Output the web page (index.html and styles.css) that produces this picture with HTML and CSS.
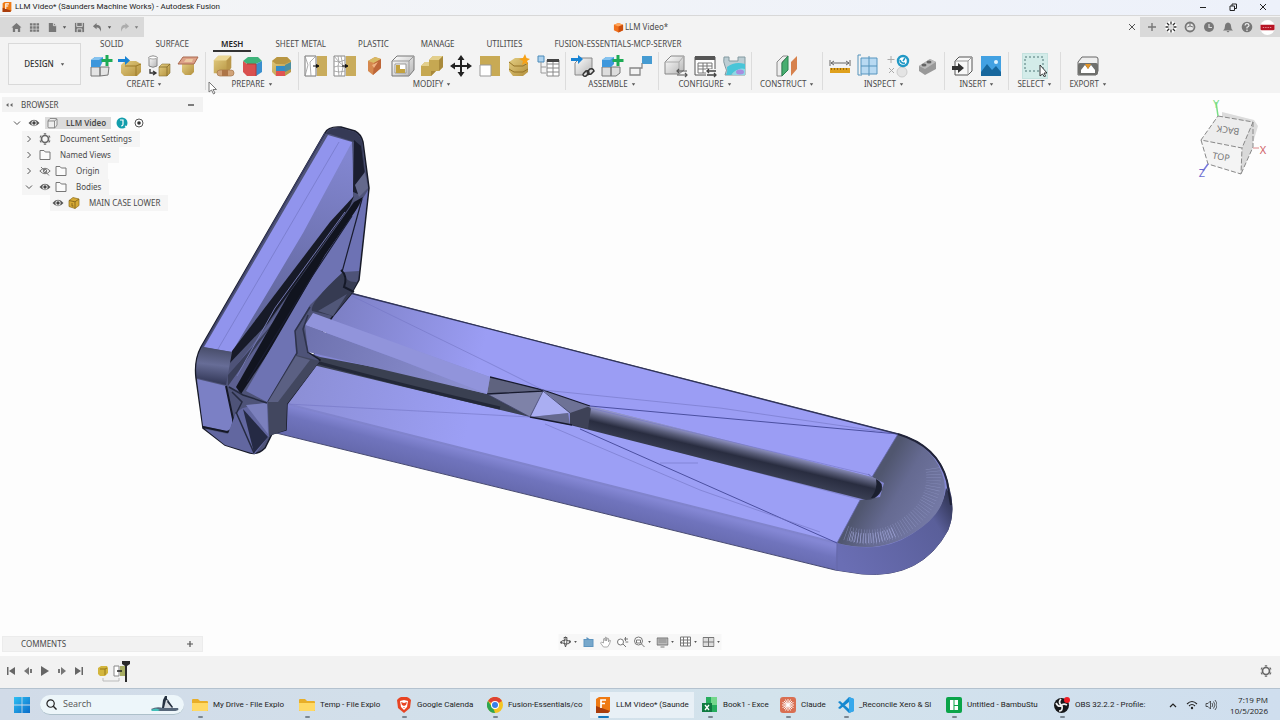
FILE: index.html
```html
<!DOCTYPE html>
<html lang="en">
<head>
<meta charset="utf-8">
<title>LLM Video* (Saunders Machine Works) - Autodesk Fusion</title>
<link rel="stylesheet" href="styles.css">
</head>
<body>
<svg class="defs" aria-hidden="true">
  <defs>
    <linearGradient id="gold" x1="0" y1="0" x2="1" y2="1"><stop offset="0" stop-color="#e3cd82"/><stop offset="1" stop-color="#b3903c"/></linearGradient>
    <linearGradient id="steel" x1="0" y1="0" x2="1" y2="1"><stop offset="0" stop-color="#fff"/><stop offset="1" stop-color="#b4b4b4"/></linearGradient>
    <linearGradient id="sky" x1="0" y1="0" x2="1" y2="1"><stop offset="0" stop-color="#2fc0f3"/><stop offset="1" stop-color="#0a6cc9"/></linearGradient>
    <symbol id="caret" viewBox="0 0 6 6"><path d="M1 1.500h4L3 4.500z" fill="#555"/></symbol>
    <symbol id="eye" viewBox="0 0 12 12"><path d="M.5 6Q6-.5 11.500 6 6 12.500.5 6z" fill="#555"/><circle cx="6" cy="6" r="2.600" fill="#f3f3f3"/><circle cx="6" cy="6" r="1.700" fill="#444"/></symbol>
    <symbol id="eye-off" viewBox="0 0 12 12"><path d="M.8 6Q6 .5 11.200 6 6 11.500.8 6zM2 2l8 8.500" fill="none" stroke="#777"/><circle cx="6" cy="6" r="1.700" fill="none" stroke="#777"/></symbol>
    <symbol id="folder" viewBox="0 0 12 12"><path d="M1 10.500v-9h4l1.300 1.500H11v7.500z" fill="#fbfbfb" stroke="#777"/></symbol>
    <symbol id="right" viewBox="0 0 12 12"><path d="M4.500 3l3 3-3 3" fill="none" stroke="#555"/></symbol>
    <symbol id="down" viewBox="0 0 12 12"><path d="M3 4.500l3 3 3-3" fill="none" stroke="#555"/></symbol>
    <symbol id="gear" viewBox="0 0 12 12"><path d="M6 1.500V.3M6 11.700v-1.200M2.100 3.800l-1-.6M10.900 8.800l-1-.6M9.900 3.800l1-.6M1.100 8.800l1-.6" stroke="#666" stroke-width="2.400"/><circle cx="6" cy="6" r="3.500" fill="none" stroke="#666" stroke-width="1.700"/></symbol>
    <symbol id="cube" viewBox="0 0 12 12"><path d="M2 4q0-.5 2-2.500h6q1 0 1 1V8l-2 2.800H3q-1 0-1-1zM2 4h6.500L11 2M8.500 4v6.800" fill="#eee" stroke="#777" stroke-width=".8"/></symbol>
    <symbol id="body" viewBox="0 0 12 12"><path d="M1 3.500L5 .5l6 1.500v6.500l-4 3L1 9.500z" fill="#d6aa35" stroke="#8a6a1a" stroke-width=".7"/><path d="M1 3.500l6 1.300 4-2.800M7 5v6.500M4 6v3h1.500" fill="none" stroke="#7a5c15" stroke-width=".8"/></symbol>
    <symbol id="goldbox" viewBox="0 0 24 24"><path d="M3 7l5-5h13q1 0 1 1v12l-5 6H3z" fill="url(#gold)"/><path d="M3 7l5-5h14l-5 5z" fill="#ead694"/><path d="M17 7l5-5v13l-5 6z" fill="#b9974a"/></symbol>
    <symbol id="fusion" viewBox="0 0 16 16"><path d="M1 2l3-2h11v14l-2 2H1z" fill="#ef7a13"/><path d="M1 9l14 5-2 2H1z" fill="#a93d0c"/><path d="M6 11V3h5M6 6.500h4" fill="none" stroke="#fff" stroke-width="1.700"/></symbol>
    <symbol id="files" viewBox="0 0 16 16"><path d="M0 3q0-1 1-1h5l2 2h7q1 0 1 1v9H0z" fill="#e8ae28"/><path d="M0 6h16v7q0 1-1 1H1q-1 0-1-1z" fill="#ffd964"/></symbol>
  </defs>
</svg>

<header class="titlebar">
  <svg class="i9"><use href="#fusion"/></svg>
  <h1 class="app-title">LLM Video* (Saunders Machine Works) - Autodesk Fusion</h1>
  <div class="window-buttons">
    <button aria-label="Minimize"><svg viewBox="0 0 10 10"><path d="M2 5.500h6" stroke="#222"/></svg></button>
    <button aria-label="Restore"><svg viewBox="0 0 10 10"><path d="M2 4h4.500v4.500H2zM4 4V2h4.500v4.500h-2" fill="none" stroke="#222"/></svg></button>
    <button aria-label="Close"><svg viewBox="0 0 10 10"><path d="M2 2l6 6M8 2L2 8" stroke="#222"/></svg></button>
  </div>
</header>

<div class="tabstrip">
  <nav class="quick">
    <button aria-label="Home"><svg viewBox="0 0 12 12"><path d="M6 1l5.500 5H10v5H7.500V7.500h-3V11H2V6H.5z" fill="#777"/></svg></button>
    <button aria-label="Data panel"><svg viewBox="0 0 12 12"><path d="M1 2.500h10M1 6h10M1 9.500h10" stroke="#777" stroke-width="2.500" stroke-dasharray="2.800 .8"/></svg></button>
    <button aria-label="File" class="with-caret"><svg viewBox="0 0 12 12"><path d="M2 1h5l3 3v7H2z" fill="#777"/><path d="M7 1v3h3" stroke="#ddd" fill="none"/></svg><svg class="caret"><use href="#caret"/></svg></button>
    <button aria-label="Save"><svg viewBox="0 0 12 12"><path d="M1 1h10v10H1z" fill="#777"/><path d="M3 1v4h6V1M3.500 11V7.500h5V11" fill="none" stroke="#ddd"/></svg></button>
    <button aria-label="Undo" class="with-caret"><svg viewBox="0 0 12 12"><path d="M5 1L1 4.500 5 8V6q3-.5 4.500 4.500Q11 3 5 3z" fill="#777"/></svg><svg class="caret"><use href="#caret"/></svg></button>
    <button aria-label="Redo" class="with-caret faded"><svg viewBox="0 0 12 12"><path d="M7 1l4 3.500L7 8V6q-3-.5-4.500 4.500Q1 3 7 3z" fill="#999"/></svg><svg class="caret"><use href="#caret"/></svg></button>
  </nav>
  <div class="doc-tab">
    <svg class="i11" viewBox="0 0 12 12"><path d="M1 3l5-2 5 2v6l-5 2.500L1 9z" fill="#f0701c"/><path d="M1 3l5 2 5-2-5-2z" fill="#ffa65c"/><path d="M6 5v6.500L11 9V3z" fill="#cb4e0c"/></svg>
    <span>LLM Video*</span>
    <button class="tab-close" aria-label="Close tab"><svg viewBox="0 0 10 10"><path d="M2 2l6 6M8 2L2 8" stroke="#555"/></svg></button>
  </div>
  <nav class="account">
    <button aria-label="New design"><svg viewBox="0 0 12 12"><path d="M6 2v8M2 6h8" stroke="#777" stroke-width="1.400"/></svg></button>
    <button aria-label="Extensions"><svg viewBox="0 0 12 12"><circle cx="6" cy="6" r="4" fill="none" stroke="#fff" stroke-width="4"/><path d="M6 .5v3M6 8.500v3M.5 6h3M8.500 6h3M2 2l2.200 2.200M7.800 7.800L10 10M10 2L7.800 4.200M4.200 7.800L2 10" stroke="#333" stroke-width="1.300"/></svg></button>
    <button aria-label="Online status"><svg viewBox="0 0 12 12"><circle cx="6" cy="6" r="4.500" fill="#e6e6e6" stroke="#777" stroke-width="1.800"/><path d="M6 2v3l3 1M6 5L3.500 6" stroke="#777" fill="none"/></svg></button>
    <button aria-label="Job status"><svg viewBox="0 0 12 12"><circle cx="6" cy="6" r="5" fill="#777"/><path d="M6 3v3.500h3" stroke="#ddd" fill="none" stroke-width="1.200"/></svg></button>
    <button aria-label="Notifications"><svg viewBox="0 0 12 12"><path d="M1 9.500Q3 8 3 5q0-3 3-3.500Q9 2 9 5q0 3 2 4.500zM4.500 10h3L6 11.500z" fill="#777"/></svg></button>
    <button aria-label="Help"><svg viewBox="0 0 12 12"><circle cx="6" cy="6" r="5.300" fill="#777"/><path d="M4 4.500q.2-1.800 2-1.800t2 1.700q0 1-2 2v1M6 8.500V10" stroke="#eee" fill="none" stroke-width="1.200"/></svg></button>
    <button aria-label="Profile" class="avatar"><svg viewBox="0 0 16 16"><circle cx="8" cy="8" r="8" fill="#fff"/><path d="M.5 5h15v5l-1 1h-13l-1-1z" fill="#b71525"/><path d="M3 8h10" stroke="#e7929b" stroke-dasharray="1.500 1"/></svg></button>
  </nav>
</div>

<section class="ribbon">
  <button class="workspace-switch">DESIGN <svg class="caret"><use href="#caret"/></svg></button>
  <div class="ribbon-main">
    <nav class="ribbon-tabs">
      <button>SOLID</button><button>SURFACE</button><button class="active">MESH</button><button>SHEET METAL</button><button>PLASTIC</button><button>MANAGE</button><button>UTILITIES</button><button>FUSION-ESSENTIALS-MCP-SERVER</button>
    </nav>
    <div class="groups">
      <div class="group">
        <div class="tools">
          <button aria-label="Insert mesh"><svg viewBox="0 0 24 24"><path d="M2 13h9v9H2zM11 13h9l-1 8-8 1z" fill="#e4e4e4" stroke="#777"/><path d="M2 6l4-3h8v4l-3 6H2z" fill="#3d97dc"/><path d="M2 6l4-3h8l-4 3z" fill="#86c3ef"/><path d="M18 1v11M12.500 6.500h11" stroke="#1eab55" stroke-width="3"/></svg></button>
          <button aria-label="Tessellate"><svg viewBox="0 0 24 24"><path d="M3 11l4-4h11l5 3v8l-4 4H6l-3-3z" fill="url(#gold)"/><path d="M7 12h11l5-2M18 12v10" stroke="#9b7a2a" fill="none"/><path d="M0 5h7V2l5 4.500L7 11V8H0z" fill="#1783d4"/></svg></button>
          <button aria-label="Convert"><svg viewBox="0 0 24 24"><path d="M2 3v9q4 2.500 8 0V3q-4-2-8 0z" fill="url(#steel)" stroke="#888"/><ellipse cx="6" cy="3.500" rx="4" ry="1.500" fill="#fff" stroke="#888" stroke-width=".7"/><path d="M12 13l3-3h8v9l-3 3h-8z" fill="url(#gold)" stroke="#8a7232" stroke-width=".6"/><path d="M12 13h8v9M20 13l3-3" stroke="#7a6224" fill="none" stroke-width=".7"/><path d="M3 15v4h5M6 17l3 2-3 2" stroke="#333" fill="none" stroke-width="1.300"/></svg></button>
          <button aria-label="Plane section"><svg viewBox="0 0 24 24"><path d="M6 9h12v9l-3 3H9l-3-3z" fill="url(#gold)"/><path d="M2 10L7 3h15l-4 7z" fill="#dda188" stroke="#a96a50"/><path d="M8 8l2-3h7l-1 3z" fill="#ecc9a0"/></svg></button>
        </div>
        <button class="group-label">CREATE <svg class="caret"><use href="#caret"/></svg></button>
      </div>
      <div class="group">
        <div class="tools">
          <button aria-label="Repair"><svg viewBox="0 0 24 24"><use href="#goldbox" width="22" height="22"/><rect x="6" y="16" width="17" height="6" rx="3" fill="#d0a379" stroke="#a37548" stroke-width=".7"/><path d="M11 16h6v6h-6z" fill="#ad7547"/></svg></button>
          <button aria-label="Generate face groups"><svg viewBox="0 0 24 24"><path d="M3 7l5-4h10l4 4-6 3H7z" fill="#3fb37a"/><path d="M3 7l4 3h9v12H7l-4-4z" fill="#d9504f"/><path d="M16 10l6-3v11l-6 4z" fill="#3a8fce"/><path d="M7 10h9v12" stroke="#b63a3a" fill="none"/></svg></button>
          <button aria-label="Combine face groups"><svg viewBox="0 0 24 24"><path d="M3 7l5-4h10l4 4v11l-6 4H7l-4-4z" fill="url(#gold)"/><path d="M3 7l4 3h9l6-3-4-4H8z" fill="#b89643"/><path d="M7 12h9v5H7z" fill="#338cc6"/><path d="M7 17h9v5H7z" fill="#df5453"/><path d="M16 11l6-3v7l-6 3z" fill="#4b8fa0"/></svg></button>
        </div>
        <button class="group-label">PREPARE <svg class="caret"><use href="#caret"/></svg></button>
      </div>
      <div class="group">
        <div class="tools">
          <button aria-label="Remesh"><svg viewBox="0 0 24 24"><path d="M1 2h11v20H1z" fill="#fff" stroke="#777"/><path d="M1 2l3 9-3 11M12 2L6 8l1 14" fill="none" stroke="#999" stroke-width=".8"/><path d="M13 2h10v20H13z" fill="#c9ac5c"/><path d="M9 12h5M12.500 10.500l2.500 1.500-2.500 1.500z" stroke="#111" fill="#111"/></svg></button>
          <button aria-label="Reduce"><svg viewBox="0 0 24 24"><path d="M1 2h11v20H1z" fill="#fff" stroke="#888"/><path d="M1 7l5 1 6-2M1 13l4-1 7 1M1 17l5 1 6-1M5 2l1 6-1 4 1 10M8 2l1 5 1 6-2 9M1 2l5 6 6 5" fill="none" stroke="#999" stroke-width=".8"/><path d="M13 2h10v20H13z" fill="#c9ac5c"/><path d="M9 12h5M12.500 10.500l2.500 1.500-2.500 1.500z" stroke="#111" fill="#111"/></svg></button>
          <button aria-label="Direct edit"><svg viewBox="0 0 24 24"><path d="M6 7l7-4 6 2v9l-8 7-5-4z" fill="#d6884e"/><path d="M6 7l7-4 6 2-7 4z" fill="#d8ba64"/><path d="M12 9l7-4v9l-8 7z" fill="#bd6638"/><path d="M10 11l6-3-4 6z" fill="#f0b281"/></svg></button>
          <button aria-label="Shell"><svg viewBox="0 0 24 24"><path d="M1 7l5-5h17v14l-5 6H1z" fill="url(#steel)" stroke="#777"/><path d="M1 7h17v15M18 7l5-5" stroke="#999" fill="none"/><path d="M4 10h11v9H4z" fill="#fff" stroke="#999"/><path d="M5 11h4v4h5v4H5z" fill="#c3a23f"/></svg></button>
          <button aria-label="Combine"><svg viewBox="0 0 24 24"><path d="M9 6l4-4h10v11l-4 4h-3l-5 5H1V12l4-4h4z" fill="#c6a852"/><path d="M9 6l4-4h10l-4 4zM1 12l4-4h4v4z" fill="#e3cf8c"/><path d="M19 6l4-4v11l-4 4zM11 17h5l-5 5z" fill="#a98a3c"/></svg></button>
          <button aria-label="Move"><svg viewBox="0 0 24 24"><path d="M12 1l3.500 5h-7zM12 23l3.500-5h-7zM1 12l5-3.500v7zM23 12l-5-3.500v7z" fill="#222"/><path d="M12 4v16M4 12h16" stroke="#222" stroke-width="2"/></svg></button>
          <button aria-label="Scale"><svg viewBox="0 0 24 24"><path d="M2 2h20v20H2z" fill="#c8aa55"/><path d="M2 11h11v11H2z" fill="#fff" stroke="#999"/></svg></button>
          <button aria-label="Erase and fill"><svg viewBox="0 0 24 24"><path d="M2 8l6-4h10l3 5v9l-5 4H6l-4-5z" fill="url(#gold)"/><path d="M2 8l5 4h9l5-3M2 15l5 3h9l5-3" fill="none" stroke="#947326"/><path d="M18 0l1.500 4L23 5l-3 2 1 4-3-2-3 2 1-4-4-2 4-1z" fill="#f7a116"/></svg></button>
          <button aria-label="Properties"><svg viewBox="0 0 24 24"><path d="M2 2h6v6H2z" fill="#aed2ee" stroke="#4a8ab8"/><path d="M5 8v11h5M5 13h5" stroke="#999" fill="none"/><path d="M11 6h12v16H11zM11 10h12M11 14h12M11 18h12M17 6v16" fill="#fff" stroke="#888"/><path d="M11 5h12v3H11z" fill="#444"/></svg></button>
        </div>
        <button class="group-label">MODIFY <svg class="caret"><use href="#caret"/></svg></button>
      </div>
      <div class="group">
        <div class="tools">
          <button aria-label="Insert component"><svg viewBox="0 0 24 24"><path d="M4 9l5-5h12v13l-3 4H4z" fill="url(#steel)" stroke="#888"/><path d="M0 4h7V1l5 4-5 5V7H0z" fill="#1783d4"/><path d="M12 20l3-3q3-1 3 2l-3 3q-3 1-3-2M16 18l3-3q3-1 4 2l-3 3q-3 1-4-2" fill="#ddd" stroke="#333" stroke-width="1.500"/></svg></button>
          <button aria-label="New component"><svg viewBox="0 0 24 24"><path d="M2 13h9v9H2zM11 13h9v6l-4 3h-5z" fill="#ddd" stroke="#777"/><path d="M2 6l4-3h8v7l-3 3H2z" fill="#3d97dc"/><path d="M2 6l4-3h8l-4 3z" fill="#86c3ef"/><path d="M18 1v11M12.500 6.500h11" stroke="#1eab55" stroke-width="3"/></svg></button>
          <button aria-label="Joint"><svg viewBox="0 0 24 24"><path d="M13 2h10v8H13z" fill="#459bd2"/><path d="M13 9v5H11v7H1v-7h10" fill="none" stroke="#888" stroke-width="1.300"/></svg></button>
        </div>
        <button class="group-label">ASSEMBLE <svg class="caret"><use href="#caret"/></svg></button>
      </div>
      <div class="group">
        <div class="tools">
          <button aria-label="Configure design"><svg viewBox="0 0 24 24"><path d="M1 8l6-6h13v14l-5 4H1z" fill="url(#steel)" stroke="#888"/><path d="M1 8h14l5-6M15 8v11" fill="none" stroke="#aaa"/><path d="M13 17h10M13 21h10M15 15l-2 2 2 2M21 19l2 2-2 2" stroke="#555" stroke-width="1.200" fill="none"/></svg></button>
          <button aria-label="Configuration table"><svg viewBox="0 0 24 24"><path d="M2 3h20v18H2z" fill="#fff" stroke="#555"/><path d="M5 9h14v10H5zM5 12h14M5 15h14M10 9v10M14 9v10" fill="none" stroke="#777"/><path d="M2 2h20v4H2z" fill="#555"/><path d="M13 15h10v8H13z" fill="#f3f3f3"/><path d="M14 17h9M14 21h9M16 15l-2 2 2 2M21 19l2 2-2 2" stroke="#444" stroke-width="1.300" fill="none"/></svg></button>
          <button aria-label="Configured insert"><svg viewBox="0 0 24 24"><path d="M2 3h5v4h9V3h7v18H3q3-5 0-9-2-4-1-9z" fill="#bccdd3" stroke="#8299a0"/><path d="M5 13q8-6 18-3v5q-9-1-14 6H4q2-4 1-8z" fill="#49c5d8"/><path d="M12 18q6-5 11-3v6H10z" fill="#8fd8e6"/><ellipse cx="18" cy="18" rx="4" ry="2.500" fill="#a78ee0"/></svg></button>
        </div>
        <button class="group-label">CONFIGURE <svg class="caret"><use href="#caret"/></svg></button>
      </div>
      <div class="group">
        <div class="tools">
          <button aria-label="Offset plane"><svg viewBox="0 0 24 24"><path d="M2 8l6-6h5l-6 6v14H2z" fill="#eee" stroke="#888"/><path d="M7 9l6-7v14l-6 6z" fill="#48ad70" stroke="#2b8550"/><path d="M16 8l6-6v13l-6 7z" fill="#d7814c"/></svg></button>
        </div>
        <button class="group-label">CONSTRUCT <svg class="caret"><use href="#caret"/></svg></button>
      </div>
      <div class="group">
        <div class="tools">
          <button aria-label="Measure"><svg viewBox="0 0 24 24"><path d="M2 6v6M22 6v6M3 9h18M6 7L3 9l3 2M18 7l3 2-3 2" stroke="#666" fill="none"/><path d="M2 14h20v5H2z" fill="#dfa01c"/><path d="M3 15h18" stroke="#9c6b0c" stroke-width="2" stroke-dasharray="1 2"/></svg></button>
          <button aria-label="Section analysis"><svg viewBox="0 0 24 24"><path d="M4 4h16v16H4z" fill="#b9daf2" stroke="#5795bf"/><path d="M4 1H1v20h4M12 2v20M4 12h16" fill="none" stroke="#5593bb"/></svg></button>
          <button aria-label="Interference"><svg viewBox="0 0 24 24"><path d="M5 2v7M1.500 5.500h7M3 14l5 5M8 14l-5 5" stroke="#aaa"/><circle cx="16" cy="18" r="5" fill="#e4e4e4" stroke="#ccc"/><circle cx="17" cy="7" r="5" fill="#fff" stroke="#2198c5" stroke-width="2.400"/><path d="M17 7l2-3M14 6q1 4 5 3" stroke="#2198c5" fill="none" stroke-width="1.500"/></svg></button>
          <button aria-label="Mesh display"><svg viewBox="0 0 24 24"><path d="M4 12l11-7 6 3v7l-11 6-6-4z" fill="#999"/><path d="M4 12l11-7 6 3-11 7z" fill="#bbb"/><ellipse cx="14" cy="8" rx="2.500" ry="1.500" fill="#666"/><ellipse cx="9" cy="11" rx="2.500" ry="1.500" fill="#666"/></svg></button>
        </div>
        <button class="group-label">INSPECT <svg class="caret"><use href="#caret"/></svg></button>
      </div>
      <div class="group">
        <div class="tools">
          <button aria-label="Insert derive"><svg viewBox="0 0 24 24"><path d="M5 7l4-4h13v14l-4 4H5z" fill="#f8f8f8" stroke="#555"/><path d="M5 7h13v14M18 7l4-4" fill="none" stroke="#999"/><path d="M2 12h6V9l6 5-6 5v-3H2z" fill="#333"/></svg></button>
          <button aria-label="Insert canvas"><svg viewBox="0 0 24 24"><path d="M2 2h20v20H2z" fill="#42a1e2"/><path d="M2 18l6-8 5 6 4-4 5 6v4H2z" fill="#17679d"/><circle cx="17" cy="8" r="2" fill="#e0f4ff"/></svg></button>
        </div>
        <button class="group-label">INSERT <svg class="caret"><use href="#caret"/></svg></button>
      </div>
      <div class="group">
        <div class="tools">
          <button aria-label="Select" class="selected"><svg viewBox="0 0 24 24"><path d="M2 3h18v14H2z" fill="#d3ece9" stroke="#4f7777" stroke-dasharray="2 2"/><path d="M17 11v11l2.500-2 2 3 1-1-1.500-3h3z" fill="#fff" stroke="#222" stroke-width=".9"/></svg></button>
        </div>
        <button class="group-label">SELECT <svg class="caret"><use href="#caret"/></svg></button>
      </div>
      <div class="group">
        <div class="tools">
          <button aria-label="Export"><svg viewBox="0 0 24 24"><path d="M2 8l4-5h14q2 0 2 2v12l-2 4H2z" fill="#eee" stroke="#666"/><rect x="2" y="9" width="20" height="12" rx="2" fill="#6f706d"/><path d="M5 19v-3l4-5 3 4 3-4 4 5v3z" fill="#fff"/><path d="M9 10h6l-3 5z" fill="#e29427"/></svg></button>
        </div>
        <button class="group-label">EXPORT <svg class="caret"><use href="#caret"/></svg></button>
      </div>
    </div>
  </div>
</section>

<main class="viewport">
  <svg class="scene" viewBox="0 93 1280 563" role="img" aria-label="Mesh body MAIN CASE LOWER">
    <defs>
      <linearGradient id="top" gradientUnits="userSpaceOnUse" x1="330" y1="320" x2="480" y2="360"><stop offset="0" stop-color="#7c7fc4"/><stop offset="1" stop-color="#9b9df4"/></linearGradient>
      <linearGradient id="low" gradientUnits="userSpaceOnUse" x1="300" y1="380" x2="470" y2="420"><stop offset="0" stop-color="#8c8fd6"/><stop offset="1" stop-color="#9c9ff5"/></linearGradient>
      <linearGradient id="side" gradientUnits="userSpaceOnUse" x1="560" y1="475" x2="553" y2="502"><stop offset="0" stop-color="#8487d4"/><stop offset=".4" stop-color="#7074bd"/><stop offset="1" stop-color="#666aae"/></linearGradient>
      <linearGradient id="end" gradientUnits="userSpaceOnUse" x1="872" y1="488" x2="935" y2="525"><stop offset="0" stop-color="#50566f"/><stop offset=".35" stop-color="#656a91"/><stop offset="1" stop-color="#767ba8"/></linearGradient>
      <linearGradient id="rim" gradientUnits="userSpaceOnUse" x1="840" y1="560" x2="955" y2="490"><stop offset="0" stop-color="#6a6eb4"/><stop offset=".75" stop-color="#5a5f9a"/><stop offset="1" stop-color="#252941"/></linearGradient>
      <linearGradient id="slot" gradientUnits="userSpaceOnUse" x1="730" y1="441" x2="724" y2="466"><stop offset="0" stop-color="#9396c8"/><stop offset=".25" stop-color="#5b5f7b"/><stop offset=".5" stop-color="#292d40"/><stop offset="1" stop-color="#3a3f54"/></linearGradient>
      <linearGradient id="face" gradientUnits="userSpaceOnUse" x1="320" y1="150" x2="270" y2="340"><stop offset="0" stop-color="#8286d0"/><stop offset="1" stop-color="#5d6296"/></linearGradient>
      <linearGradient id="corner" gradientUnits="userSpaceOnUse" x1="214" y1="347" x2="210" y2="382"><stop offset="0" stop-color="#464b67"/><stop offset=".5" stop-color="#676d97"/><stop offset="1" stop-color="#353a5a"/></linearGradient>
      <linearGradient id="rib" gradientUnits="userSpaceOnUse" x1="310" y1="330" x2="480" y2="390"><stop offset="0" stop-color="#6f73b0"/><stop offset="1" stop-color="#8d91d2"/></linearGradient>
    </defs>
    <path d="M350 293L898 434Q940 446 948 484Q956 510 948 530Q922 579 862 574L835 570 272 432 287 400z" fill="url(#side)" stroke="#484b72"/>
    <path d="M837 543Q880 555 912 534Q943 514 946 488L951 496Q956 520 944 537Q917 579 862 574L835 570z" fill="url(#rim)"/>
    <path d="M335 302L350 293 898 434 872 477 590 406 543 390 490 377 310 313z" fill="url(#top)"/>
    <path d="M320 360L400 384 530 417 572 424 860 500 837 543 287 404z" fill="url(#low)"/>
    <path d="M287 404L837 543" stroke="#8184cd" stroke-width="2"/>
    <path d="M898 434Q936 447 944 480Q950 510 915 532Q880 555 837 543L860 500 880 497 884 483 872 477z" fill="url(#end)"/>
    <path d="M846 533Q880 545 910 522Q938 500 933 468" fill="none" stroke="#8e94c2" stroke-width="15" stroke-dasharray=".5 2.500" opacity=".75"/>
    <path d="M850 536Q872 542 894 532" fill="none" stroke="#a3a8dc" stroke-width="10" stroke-dasharray=".6 2"/>
    <path d="M898 434L872 477 868 474M860 500L837 543V570" fill="none" stroke="#6468a8" stroke-width=".8"/>
    <path d="M898 434Q938 446 947 481L951 505" fill="none" stroke="#202338" stroke-width="2"/>
    <path d="M590 406L872 477Q884 481 882 490 877 500 866 500L570 425 575 410z" fill="url(#slot)"/>
    <path d="M876 479q8 4 5 11-4 9-10 8 7-9 5-19z" fill="#1b1f2f"/>
    <path d="M570 412l14-7 7 3-3 21-18-5z" fill="#3e4257"/>
    <path d="M300 350L320 357 400 372 487 394 530 417 400 386 305 363z" fill="#3a4051"/>
    <path d="M305 359Q380 380 500 408" fill="none" stroke="#232838" stroke-width="3"/>
    <path d="M490 377L543 390 530 417 487 394z" fill="#7e82a8"/>
    <path d="M490 377L543 390 487 394z" fill="#5f637f"/>
    <path d="M543 390L570 413 530 417z" fill="#aaaef2"/>
    <path d="M530 417L568 413 570 425z" fill="#65698f"/>
    <path d="M543 390L590 406 570 413z" fill="#6e7296"/>
    <path d="M490 377L543 390 590 406M543 391L487 394M530 417L572 425" fill="none" stroke="#171a2e" stroke-width="1.300"/>
    <path d="M487 394L530 417 543 391 570 413" fill="none" stroke="#3a3e5c" stroke-width=".8"/>
    <path d="M590 406L898 434M580 429L837 543" fill="none" stroke="#4b4fa0"/>
    <path d="M350 295L487 362 543 390 720 408 898 434M287 404L530 417M545 424L700 490 820 532M660 463h38M590 408L870 475" fill="none" stroke="#7376c4" stroke-width=".6"/>
    <path d="M350 293L898 434" stroke="#303459" stroke-width="1.300"/>

    <path d="M325 133Q328 126 341 127L355 131Q361 134 363 142L369 188 359 280 351 294 333 316 308 352 320 360 287 404 286 430 272 434 265 448Q258 455 250 453L225 445 203 428 196 378Q194 360 201 347z" fill="#4e5378" stroke="#181b29" stroke-width="1.500"/>
    <path d="M328 135L352 142 353 196 232 352 204 347z" fill="#9194ed"/>
    <path d="M352 142L353 197 232 352 303 233z" fill="url(#face)"/>
    <path d="M339 142L218 349" stroke="#6e72bd" stroke-width=".6"/>
    <path d="M326 134Q328 127 341 128L355 132Q361 136 362 143L366 180 357 180 354 142 330 134z" fill="#353a55"/>
    <path d="M354 140l7 6 5 38-8 10-5-2z" fill="#1b1e2f"/><path d="M355 185l10-13 3 16-9 9z" fill="#64698c"/>
    <path d="M362 200L368 190 359 271 343 272z" fill="#6d72b4"/>
    <path d="M354 196L330 222 232 351 228 365 268 323 350 206z" fill="#171a27"/>
    <path d="M350 207L268 325 228 376 228 386 238 391 294 302z" fill="#5c6091"/>
    <path d="M268 329L228 375V386L300 286z" fill="#393e59"/>
    <path d="M363 197L354 202 290 292 236 387 241 394 298 308 340 242z" fill="#11141f"/>
    <path d="M345 212L275 308 237 376" fill="none" stroke="#7277b0"/>
    <path d="M361 203L325 255 246 391 267 402 296 354 295 331 310 305 345 271z" fill="#6e73b3"/>
    <path d="M362 199L342 272M352 216L311 278 247 382" fill="none" stroke="#191c30" stroke-width="1.200"/>
    <path d="M343 272Q346 283 357 282L351 294 333 316 312 311Q309 303 343 272z" fill="#363b52"/>
    <path d="M347 294L333 316 318 311z" fill="#515778"/>
    <path d="M341 270q7 6 3 17l10 5" fill="none" stroke="#151928" stroke-width="2"/>
    <path d="M305 325L400 360 487 394 308 352z" fill="url(#rib)"/>
    <path d="M313 313L490 377 487 394 400 360 305 325z" fill="#9194db"/>
    <path d="M310 307L295 331 297 353 268 402M308 315l-5 14 5 24" fill="none" stroke="#2e334c" stroke-width="1.500"/>
    <path d="M296 355L320 361 287 404 286 430 269 436 268 402z" fill="#42475f"/>
    <path d="M296 356L310 360 278 402 268 402z" fill="#5b6083"/>
    <path d="M202 347L232 352 226 385 197 378Q194 360 202 347z" fill="url(#corner)"/>
    <path d="M197 379L226 386 230 402 232 417Q233 430 226 431L203 426z" fill="#7b80c5"/>
    <path d="M226 386L233 419Q234 432 227 432L203 427" fill="none" stroke="#151827" stroke-width="2"/>
    <path d="M205 429L228 434 236 412 243 408 267 402 269 436 255 454 225 445z" fill="#6267a0"/>
    <path d="M243 409L268 437 254 453z" fill="#252a44"/><path d="M246 405L267 403 268 434z" fill="#7b80bd"/>
    <path d="M236 412L254 453M229 387l14 8 24 8M232 392l10 10-6 12" fill="none" stroke="#252a40" stroke-width="1.500"/>
    <path d="M325 133L202 347" stroke="#3c406a" stroke-width="1.200"/>

    <g class="viewcube">
      <path d="M1222 112l32 8 4 6-6 20-30-14z" fill="#bbb" opacity=".5"/>
      <path d="M1218 116L1253 122 1242 148 1201 140z" fill="#ededed"/><path d="M1201 140L1242 148 1241 174 1208 164z" fill="#f4f4f4"/><path d="M1253 122V147L1241 174 1242 148z" fill="#d9d9d9"/>
      <path d="M1218 116L1253 122 1242 148 1201 140zM1201 140L1208 164 1241 174 1242 148M1253 122V147L1241 174" fill="none" stroke="#888" stroke-dasharray="5 2"/>
      <path d="M1218 116L1216 102" stroke="#79dd85" stroke-width="1.500"/><path d="M1253 148h6" stroke="#d88" /><path d="M1208 164l-5 7" stroke="#77d" stroke-width="1.500"/>
      <text x="1228" y="133" transform="rotate(189 1228 130)" class="face">BACK</text>
      <text x="1221" y="160" transform="rotate(10 1221 157)" class="face">TOP</text>
      <text x="1216" y="108" class="axis-y">Y</text><text x="1263" y="154" class="axis-x">X</text><text x="1202" y="177" class="axis-z">Z</text>
    </g>
  </svg>

  <aside class="browser">
    <div class="panel-head"><svg class="i9" viewBox="0 0 10 10"><path d="M4.500 3v4L2 5zM8.500 3v4L6 5z" fill="#666"/></svg><h2>BROWSER</h2><button aria-label="Collapse browser"><svg viewBox="0 0 10 10"><path d="M2 5h6" stroke="#555" stroke-width="1.500"/></svg></button></div>
    <ul class="tree">
      <li class="root"><svg><use href="#down"/></svg><svg><use href="#eye"/></svg><span class="root-name"><svg><use href="#cube"/></svg><b>LLM Video</b></span><svg viewBox="0 0 12 12"><circle cx="6" cy="6" r="5.500" fill="#139eac"/><path d="M4 3h3v4.500q0 1.500-2 1.500M9 9l2 1" stroke="#fff" fill="none" stroke-width="1.200"/></svg><svg viewBox="0 0 12 12"><circle cx="6" cy="6" r="4" fill="#fff" stroke="#555"/><circle cx="6" cy="6" r="1.800" fill="#333"/></svg></li>
      <li class="child"><svg><use href="#right"/></svg><svg><use href="#gear"/></svg><span>Document Settings</span></li>
      <li class="child"><svg><use href="#right"/></svg><svg><use href="#folder"/></svg><span>Named Views</span></li>
      <li class="child"><svg><use href="#right"/></svg><svg><use href="#eye-off"/></svg><svg><use href="#folder"/></svg><span>Origin</span></li>
      <li class="child"><svg><use href="#down"/></svg><svg><use href="#eye"/></svg><svg><use href="#folder"/></svg><span>Bodies</span></li>
      <li class="leaf"><svg><use href="#eye"/></svg><svg><use href="#body"/></svg><span>MAIN CASE LOWER</span></li>
    </ul>
  </aside>

  <aside class="comments panel-head"><h2>COMMENTS</h2><button aria-label="Expand comments"><svg viewBox="0 0 10 10"><path d="M2 5h6M5 2v6" stroke="#555" stroke-width="1.200"/></svg></button></aside>

  <nav class="navbar">
    <button aria-label="Orbit"><svg viewBox="0 0 12 12"><path d="M6 1q3 2 0 10-3-5 0-10M1 6q5-4 10 0-3 4-10 0M4 2l2-1 2 1M10 4l1 2-2 1M2 8L1 6" fill="none" stroke="#555"/></svg><svg class="caret"><use href="#caret"/></svg></button>
    <button aria-label="Look at"><svg viewBox="0 0 12 12"><path d="M1 3h3V1l3 2h4v8H1z" fill="#5e95bf"/><path d="M2 5h8M2 7h8M2 9h8" stroke="#a7cae3" stroke-width=".7"/></svg></button>
    <button aria-label="Pan"><svg viewBox="0 0 12 12"><path d="M4 11L1 7l1-1 2 1V3l1-1 .7 3L6 1l1 .5V5l1-3 1 .5V6l1-2 1 .5L10 8l-2 3z" fill="#fff" stroke="#999" stroke-width=".8"/></svg></button>
    <button aria-label="Zoom"><svg viewBox="0 0 12 12"><circle cx="4" cy="6" r="3" fill="#fff" stroke="#777"/><path d="M6.500 8l3 3M9 1v4M7.500 3h4M9 6h3" stroke="#777"/></svg></button>
    <button aria-label="Fit"><svg viewBox="0 0 12 12"><circle cx="5" cy="5" r="4" fill="#fff" stroke="#777"/><path d="M8 8l3 3M3 4h4v3H3z" fill="none" stroke="#777"/></svg><svg class="caret"><use href="#caret"/></svg></button>
    <button aria-label="Display settings"><svg viewBox="0 0 12 12"><path d="M.5 2h11v7H.5zM4 11h4" fill="#bbb" stroke="#777"/><path d="M2 4h8M2 6h8" stroke="#888"/></svg><svg class="caret"><use href="#caret"/></svg></button>
    <button aria-label="Grid"><svg viewBox="0 0 12 12"><path d="M1 1h10v9H1zM1 4h10M1 7h10M4 1v9M8 1v9" fill="#fff" stroke="#777"/></svg><svg class="caret"><use href="#caret"/></svg></button>
    <button aria-label="Viewports"><svg viewBox="0 0 12 12"><path d="M.5 1.500h11v9H.5zM6 1.500v9M.5 6h11" fill="#ddd" stroke="#777"/></svg><svg class="caret"><use href="#caret"/></svg></button>
  </nav>
</main>

<section class="timeline">
  <div class="playback">
    <button aria-label="Go to start"><svg viewBox="0 0 10 10"><path d="M1 1h1.500v8H1zM9 1v8L3 5z" fill="#666"/></svg></button>
    <button aria-label="Step back"><svg viewBox="0 0 10 10"><path d="M6 1v8L1 5zM7 3h2v4H7z" fill="#777"/></svg></button>
    <button aria-label="Play"><svg viewBox="0 0 10 10"><path d="M1 0l8 5-8 5z" fill="#666"/></svg></button>
    <button aria-label="Step forward"><svg viewBox="0 0 10 10"><path d="M4 1v8l5-4zM1 3h2v4H1z" fill="#777"/></svg></button>
    <button aria-label="Go to end"><svg viewBox="0 0 10 10"><path d="M7.500 1H9v8H7.500zM1 1v8l6-4z" fill="#666"/></svg></button>
  </div>
  <svg class="features" viewBox="0 0 36 24" role="img" aria-label="Timeline features"><path d="M2 9l3-2h6l1 2v5l-3 3H4l-2-2z" fill="#d3b63e"/><path d="M4 10h5l2-1M9 10v6" stroke="#96781b" fill="none"/><path d="M18 7h5v10h-5z" fill="#fff" stroke="#888"/><path d="M24 7h5v10h-5z" fill="#a8ae63"/><path d="M21 12h5" stroke="#222" stroke-width="1.500"/><path d="M7 19v3h16v-3" fill="none" stroke="#bbb"/><path d="M26 2h8v3l-3 2v16h-2V7l-3-2z" fill="#2a2a2a"/></svg>
  <button class="settings" aria-label="Timeline settings"><svg><use href="#gear"/></svg></button>
</section>

<footer class="taskbar">
  <button class="start" aria-label="Start"><svg viewBox="0 0 16 16"><path d="M0 0h7.600v7.600H0zM8.400 0H16v7.600H8.400zM0 8.400h7.600V16H0zM8.400 8.400H16V16H8.400z" fill="url(#sky)"/></svg></button>
  <label class="search"><svg class="i11" viewBox="0 0 12 12"><circle cx="5" cy="5" r="4" fill="none" stroke="#222" stroke-width="1.300"/><path d="M8 8l3.500 3.500" stroke="#222" stroke-width="1.500"/></svg><input type="text" placeholder="Search" aria-label="Search"><svg class="scene-art" viewBox="0 0 28 18"><path d="M0 14q6-3 12-1l15 0q2 3-5 3H2z" fill="#57677a"/><path d="M0 15q5-3 9 0l-2 1H1z" fill="#42bfb9"/><path d="M12 13l2-9 3 0 1 2 4 7z" fill="#d5d9de"/><path d="M11 13l1-8 2-4 2 0 0 3 2 2-3-1-2 8zM17 5l5 7-1 1-5-6z" fill="#263140"/></svg></label>
  <div class="tasks">
    <button class="task"><svg><use href="#files"/></svg><span>My Drive - File Explo</span></button>
    <button class="task"><svg><use href="#files"/></svg><span>Temp - File Explo</span></button>
    <button class="task"><svg viewBox="0 0 16 16"><path d="M3 1l2-1h6l2 1 2 2-1 8-6 5-6-5L1 3z" fill="#e84423"/><path d="M8 3l4 1-1 6-3 3-3-3-1-6z" fill="#fff"/><path d="M5 5l3 1 3-1-1 3-2 1-2-1zM7 10h2l-1 1z" fill="#e84423"/></svg><span>Google Calenda</span></button>
    <button class="task"><svg viewBox="0 0 16 16"><circle cx="8" cy="8" r="8" fill="#f3c422"/><path d="M8 8L1 4a8 8 0 0 1 14 0z" fill="#de4334"/><path d="M1 4l6 9 1 3A8 8 0 0 1 1 4z" fill="#2da552"/><circle cx="8" cy="8" r="4" fill="#fff"/><circle cx="8" cy="8" r="3" fill="#397fe8"/></svg><span>Fusion-Essentials/co</span></button>
    <button class="task current"><svg><use href="#fusion"/></svg><span>LLM Video* (Saunde</span></button>
    <button class="task"><svg viewBox="0 0 16 16"><path d="M4 0h10l1 1v14H4z" fill="#26ad5d"/><path d="M9 0h6v8H9z" fill="#74d78c"/><path d="M0 6h10v9H0z" fill="#107b41"/><path d="M3 8l4 5M7 8l-4 5" stroke="#fff" stroke-width="1.300"/></svg><span>Book1 - Exce</span></button>
    <button class="task"><svg viewBox="0 0 16 16"><rect width="16" height="16" rx="3" fill="#d96f52"/><path d="M8 2v12M2 8h12M4 4l8 8M12 4l-8 8M5.500 2.500l5 11M10.500 2.500l-5 11M2.500 5.500l11 5M2.500 10.500l11-5" stroke="#fff" stroke-width=".9"/></svg><span>Claude</span></button>
    <button class="task"><svg viewBox="0 0 16 16"><path d="M11 0l5 2v12l-5 2-9-9L0 5l2-1 9 8V5L2 12l-2-1 2-2z" fill="#1688d0"/><path d="M11 0l5 2v12l-5 2z" fill="#36a8ec"/></svg><span>_Reconcile Xero &amp; Sl</span></button>
    <button class="task"><svg viewBox="0 0 16 16"><rect width="16" height="16" rx="2" fill="#0aa449"/><path d="M4 3h3.500v10H4zM8.500 3H12v5H8.500zM8.500 9H12v4H8.500z" fill="#fff"/></svg><span>Untitled - BambuStu</span></button>
    <button class="task"><svg viewBox="0 0 16 16"><circle cx="7.500" cy="8.500" r="7.500" fill="#161719"/><path d="M7 2q-3 3 0 6M13 8q-4-2-6 1M5 14q4 0 3-5M2 6q2 4 5 3" fill="none" stroke="#eee" stroke-width="1.700"/><circle cx="13" cy="3" r="3" fill="#ed1c24"/></svg><span>OBS 32.2.2 - Profile:</span></button>
  </div>
  <div class="tray">
    <button aria-label="Hidden icons"><svg viewBox="0 0 12 12"><path d="M3 8l3-3 3 3" stroke="#222" fill="none" stroke-width="1.200"/></svg></button>
    <button aria-label="Network"><svg viewBox="0 0 12 12"><path d="M1 5q5-5 10 0M3 7q3-3 6 0" fill="none" stroke="#222" stroke-width="1.100"/><circle cx="6" cy="9" r="1.200" fill="#222"/></svg></button>
    <button aria-label="Volume"><svg viewBox="0 0 12 12"><path d="M1 4.500h2L5.500 2v8L3 7.500H1zM7 4q1.500 2 0 4M8.500 2.500q3 3.500 0 7M10 1q4 5 0 10" fill="none" stroke="#333" stroke-width=".8"/></svg></button>
    <button class="clock"><time>7:19 PM</time><time>10/5/2026</time></button>
  </div>
</footer>
<svg class="pointer" viewBox="0 0 10 14"><path d="M1 1v10l2.500-2 2 4 1.500-1-2-3.500h3.500z" fill="#fff" stroke="#777"/></svg>
</body>
</html>
```
FILE: styles.css
```css
* { box-sizing: border-box; }
body {
  margin: 0; height: 100vh; overflow: hidden;
  display: flex; flex-direction: column;
  font: 8px/12px "Noto Sans", sans-serif; color: #4a4a4a; background: #f3f3f3;
}
button { margin: 0; padding: 0; border: 0; background: none; font: inherit; color: inherit; display: flex; align-items: center; justify-content: center; }
h1, h2 { margin: 0; font: inherit; }
svg { display: block; flex: none; width: 12px; height: 12px; }
.defs { position: absolute; width: 0; height: 0; }
svg.caret { width: 5px; height: 5px; }
svg.i9 { width: 10px; height: 10px; }
svg.i11 { width: 11px; height: 11px; }

.titlebar { flex: none; height: 16px; display: flex; align-items: center; gap: 3px; padding: 0 12px 2px 2px; background: linear-gradient(90deg, #f4f5f6, #edf1fa); border-bottom: 1px solid #d8d8d8; }
.app-title { flex: 1; font-family: Roboto, sans-serif; color: #222; }
.window-buttons { display: flex; gap: 20px; }
.window-buttons svg { width: 10px; height: 10px; }

.tabstrip { flex: none; height: 21px; display: flex; align-items: stretch; padding-top: 1px; }
.quick, .account { display: flex; align-items: center; background: #d9d9d9; }
.quick { width: 144px; gap: 7px; padding-left: 11px; }
.quick svg:first-child { width: 11px; height: 11px; }
.with-caret { gap: 4px; }
.faded { opacity: .7; }
.doc-tab { flex: 1; display: flex; align-items: center; gap: 1px; padding-right: 3px; }
.doc-tab::before { content: ""; flex: 1; }
.tab-close { flex: 1; justify-content: flex-end; }
.tab-close svg { width: 10px; height: 10px; }
.account { width: 140px; gap: 7px; padding-left: 6px; }
.account .avatar svg { width: 15px; height: 15px; }

.ribbon { flex: none; height: 56px; display: flex; padding-left: 8px; }
.workspace-switch { width: 73px; height: 42px; margin-top: 6px; gap: 6px; border: 1px solid #d9d9d9; background: #f5f5f5; font-weight: 500; color: #333; }
.ribbon-main { flex: 1; min-width: 0; padding-left: 6px; }
.ribbon-tabs { display: flex; gap: 16px; padding-left: 5px; margin-top: 1px; height: 14px; }
.ribbon-tabs button { padding: 0 8px; border-bottom: 2px solid transparent; white-space: nowrap; }
.ribbon-tabs .active { font-weight: 600; color: #222; border-color: #333; }
.groups { display: flex; }
.group { padding: 1px 5px 0; border-right: 1px solid #dcdcdc; display: flex; flex-direction: column; align-items: center; }
.group:first-child { padding-left: 2px; }
.group:last-child { border: 0; }
.tools { display: flex; gap: 5px; height: 25px; align-items: center; }
.tools svg { width: 24px; height: 24px; }
.tools .selected { background: #d3ece9; outline: 1px solid #c5e2df; }
.group-label { gap: 3px; padding: 0 3px; height: 12px; }

.viewport { flex: 1; min-height: 0; position: relative; background: #fdfdfd; }
.scene { width: 100%; height: 100%; }
.face { font-size: 9px; fill: #777; text-anchor: middle; }
.axis-x, .axis-y, .axis-z { font-size: 11px; text-anchor: middle; }
.axis-x { fill: #d06068; } .axis-y { fill: #79dd85; } .axis-z { fill: #6c6cd0; }
.browser { position: absolute; left: 2px; top: 4px; width: 201px; }
.panel-head { display: flex; align-items: center; height: 15px; padding: 0 7px 0 2px; background: #f2f2f2; }
.panel-head h2 { flex: 1; padding-left: 7px; }
.panel-head button svg { width: 10px; height: 10px; }
.tree { list-style: none; margin: 3px 0 0; padding: 0; }
.tree li { display: flex; align-items: center; gap: 4px; height: 16px; width: max-content; padding-right: 8px; background: linear-gradient(#f5f5f5, #f5f5f5) no-repeat 20px 0; }
.tree span { padding-left: 5px; }
.tree .root { padding-left: 9px; gap: 5px; background: none; }
.tree .root-name { display: flex; align-items: center; gap: 8px; background: #dcdcdc; padding: 0 5px 0 1px; }
.root-name b { font-weight: 600; }
.tree .child { padding-left: 21px; }
.tree .leaf { padding-left: 50px; background-position: 48px 0; }
.comments { position: absolute; left: 2px; bottom: 4px; width: 201px; height: 16px; border: 1px solid #ececec; }
.comments h2 { padding-left: 16px; }
.navbar { position: absolute; left: 50%; bottom: 6px; transform: translateX(-50%); display: flex; align-items: center; gap: 5px; padding: 0 1px; height: 16px; background: #f7f7f7; }
.navbar button { gap: 2px; }
.navbar svg.caret { width: 4px; height: 4px; }

.timeline { flex: none; height: 32px; display: flex; align-items: center; padding: 0 8px 2px 6px; background: #f2f2f2; }
.playback { display: flex; gap: 7px; }
.playback svg { width: 10px; height: 10px; }
.features { width: 36px; height: 24px; margin-left: 12px; }
.settings { margin-left: auto; }

.taskbar { flex: none; height: 32px; display: flex; align-items: center; padding: 0 12px 0 14px; border-top: 1px solid #b4c2cf; background: linear-gradient(90deg, #d1dbe8, #d3e3ec 60%, #cfdeee); color: #222; }
.start svg { width: 16px; height: 16px; }
.search { display: flex; align-items: center; gap: 6px; width: 144px; height: 20px; margin-left: 10px; padding: 0 5px 0 6px; border-radius: 10px; background: #edf6fa; border-bottom: 1px solid #adc0ca; }
.search input { flex: 1; min-width: 0; padding: 0; border: 0; background: none; outline: none; font: 9px/12px "Open Sans", sans-serif; }
.search input::placeholder { color: #555; opacity: 1; }
.scene-art { width: 28px; height: 18px; }
.tasks { flex: 1; min-width: 0; margin-left: 3px; display: grid; grid-template-columns: 107px 97px 91px 108px 107px 78px 58px 108px 108px 106px; font-family: Roboto, sans-serif; }
.task { position: relative; height: 26px; gap: 5px; padding-left: 5px; justify-content: flex-start; white-space: nowrap; }
.task svg { width: 16px; height: 16px; }
.task::after { content: ""; position: absolute; left: 11px; bottom: 0; width: 5px; height: 2px; border-radius: 1px; background: #7b8792; }
.task.current { background: linear-gradient(#e8f0f6, #e8f0f6) no-repeat 0 0 / 104px 100%; }
.task.current::after { left: 8px; width: 11px; background: #1677bd; }
.tray { display: flex; align-items: center; gap: 7px; font-family: "Open Sans", sans-serif; }
.clock { flex-direction: column; align-items: flex-end; margin-left: 6px; line-height: 11px; }
.pointer { position: absolute; left: 208px; top: 81px; width: 10px; height: 14px; }
```
